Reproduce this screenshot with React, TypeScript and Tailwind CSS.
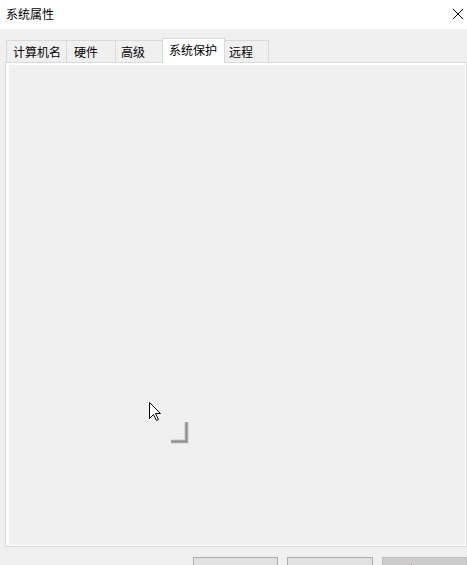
// 系统属性ダイアログ（システム保護タブ）

const font = { fontFamily: '"Noto Sans CJK SC", "Noto Sans", sans-serif' };

const tabs = [
  { label: "计算机名", w: "w-[61px]", pl: "pl-[6px]" },
  { label: "硬件", w: "w-[50px]", pl: "pl-[7px]" },
  { label: "高级", w: "w-[48px]", pl: "pl-[5px]" },
  { label: "系统保护", w: "w-[63px]", pl: "pl-[6px]", active: true },
  { label: "远程", w: "w-[45px]", pl: "pl-[4px]" },
];

const App: React.FC = () => {
  return (
    <div className="w-[467px] h-[565px] overflow-hidden bg-[#f0f0f0] text-black relative" style={font}>
      {/* タイトルバー */}
      <div className="h-[29px] bg-white flex items-center justify-between pl-[6px] pr-[2px] pb-[2px]">
        <span className="text-[12px] leading-none">系统属性</span>
        <svg width="12" height="12" viewBox="0 0 12 12" className="mr-[1px]">
          <path d="M1 1 L11 11 M11 1 L1 11" stroke="#000" strokeWidth="1" fill="none" />
        </svg>
      </div>

      {/* タブ */}
      <div className="relative z-10 flex items-end h-[24px] mt-[9px] ml-[6px]">
        {tabs.map((t, i) =>
          t.active ? (
            <div
              key={t.label}
              className={`${t.w} ${t.pl} -ml-px h-[25px] -mb-px bg-white border border-b-0 border-[#d9d9d9] text-[12px] leading-none pt-[5px]`}
            >
              {t.label}
            </div>
          ) : (
            <div
              key={t.label}
              className={`${t.w} ${t.pl} ${i > 0 ? "-ml-px" : ""} h-[22px] bg-[#f0f0f0] border border-b-0 border-[#d9d9d9] text-[12px] leading-none pt-[5px]`}
            >
              {t.label}
            </div>
          )
        )}
      </div>

      {/* タブパネル */}
      <div className="ml-[5px] w-[462px] h-[485px] border border-[#d9d9d9] bg-white pl-[3px] pt-[2px] pr-[1px] pb-[1px]">
        <div className="w-full h-full bg-[#f0f0f0] relative">
          {/* マウスカーソル */}
          <svg width="13" height="20" viewBox="0 0 13 20" className="absolute left-[140px] top-[337px]">
            <path
              d="M0.5 0.5 L0.5 16.5 L4.5 12.5 L7.5 18.5 L9.5 17.5 L6.5 11.5 L11.5 11.5 Z"
              fill="#fff"
              stroke="#000"
              strokeWidth="1"
            />
          </svg>
          {/* ドラッグ跡 */}
          <svg width="18" height="22" viewBox="0 0 18 22" className="absolute left-[162px] top-[357px]">
            <path d="M15.5 0 L15.5 19.5 L0 19.5" stroke="#c8c8c8" strokeWidth="4" fill="none" />
            <path d="M15.5 0 L15.5 19.5 L0 19.5" stroke="#8c8c8c" strokeWidth="2" fill="none" />
          </svg>
        </div>
      </div>

      {/* ボタン */}
      <div className="flex mt-[10px] ml-[193px] gap-[9px]">
        <div className="w-[86px] h-[23px] bg-[#e1e1e1] border border-[#adadad]" />
        <div className="w-[86px] h-[23px] bg-[#e1e1e1] border border-[#adadad]" />
        <div className="w-[86px] h-[23px] bg-[#cccccc] border border-[#bfbfbf] relative">
          <div className="absolute left-[28px] top-[6px] w-px h-[2px] bg-[#b08060]" />
        </div>
      </div>
    </div>
  );
};

export default App;
